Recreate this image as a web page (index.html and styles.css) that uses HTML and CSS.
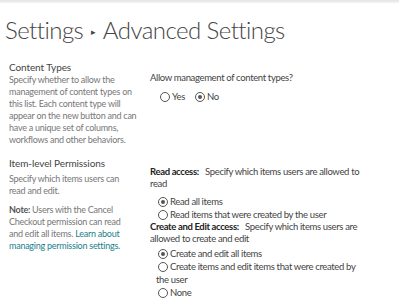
FILE: index.html
```html
<!DOCTYPE html>
<html>
<head>
<meta charset="utf-8">
<link rel="stylesheet" href="styles.css">
</head>
<body>
<div class="topbar"></div>
<h1 class="title">Settings <span class="sep">&#9656;</span> Advanced Settings</h1>
<div class="section s1">
  <div class="left">
    <div class="head">Content Types</div>
    <div class="desc">Specify whether to allow the management of content types on this list. Each content type will appear on the new button and can have a unique set of columns, workflows and other behaviors.</div>
  </div>
  <div class="right">
    <div class="q">Allow management of content types?</div>
    <div class="inline">
      <label class="opt"><span class="radio"></span>Yes</label>
      <label class="opt"><span class="radio on"></span>No</label>
    </div>
  </div>
</div>
<div class="section s2">
  <div class="left">
    <div class="head">Item-level Permissions</div>
    <div class="desc">Specify which items users can read and edit.</div>
    <div class="desc note"><b>Note:</b> Users with the Cancel Checkout permission can read and edit all items. <a class="link">Learn about managing permission settings.</a></div>
  </div>
  <div class="right">
    <div class="q"><b>Read access:</b>&nbsp;&nbsp; Specify which items users are allowed to read</div>
    <div class="list l1">
      <label class="opt"><span class="radio on"></span>Read all items</label>
      <label class="opt"><span class="radio"></span>Read items that were created by the user</label>
    </div>
    <div class="q"><b>Create and Edit access:</b>&nbsp;&nbsp; Specify which items users are allowed to create and edit</div>
    <div class="list l2">
      <label class="opt"><span class="radio on"></span>Create and edit all items</label>
      <label class="opt"><span class="radio"></span>Create items and edit items that were created by the user</label>
      <label class="opt"><span class="radio"></span>None</label>
    </div>
  </div>
</div>
</body>
</html>
```
FILE: styles.css
```css
html, body { margin: 0; padding: 0; background: #fff; }
body { font-family: Lato, "Open Sans", sans-serif; color: #333; width: 399px; height: 307px; overflow: hidden; }
.topbar { height: 3px; background: linear-gradient(#e4e4e4, #f3f3f3); }
.title { margin: 10px 0 0 5px; height: 34px; font-weight: 300; font-size: 24px; line-height: 34px; color: #444; letter-spacing: -0.55px; white-space: nowrap; }
.title .sep { display: inline-block; font-size: 9px; line-height: 10px; vertical-align: 4px; color: #444; margin: 0 2px; }
.section { display: grid; grid-template-columns: 142px 230px; }
.s1 { margin-top: 13px; }
.s2 { margin-top: 10px; }
.left { padding-left: 9px; padding-right: 1px; }
.s2 .left { padding-right: 10px; }
.head { font-size: 10px; line-height: 14px; color: #444; letter-spacing: -0.1px; }
.desc { font-size: 9px; line-height: 12px; color: #777; letter-spacing: -0.25px; }
.desc b { color: #555; font-weight: 700; }
.s2 .desc { margin-top: 3px; }
.s2 .note { margin-top: 7px; }
.link { color: #1b7e8c; }
.right { padding-left: 8px; }
.s1 .right { padding-top: 12px; }
.s2 .right { padding-top: 10px; }
.q { font-size: 9.5px; line-height: 12px; color: #444; letter-spacing: -0.35px; }
.q b { color: #222; font-weight: 700; }
.inline { display: flex; gap: 8px; margin: 6px 0 0 8px; }
.list { display: flex; flex-direction: column; margin-left: 6px; width: 208px; }
.l1 { margin-top: 5px; }
.l2 { margin-top: 2px; }
.opt { font-size: 9.5px; line-height: 13px; color: #444; letter-spacing: -0.35px; }
.radio { display: inline-block; box-sizing: border-box; width: 10px; height: 10px; border: 1px solid #555; border-radius: 50%; margin: 0 2px 0 2px; vertical-align: -2px; position: relative; }
.radio.on::after { content: ""; position: absolute; left: 2px; top: 2px; width: 4px; height: 4px; border-radius: 50%; background: #555; }
```
